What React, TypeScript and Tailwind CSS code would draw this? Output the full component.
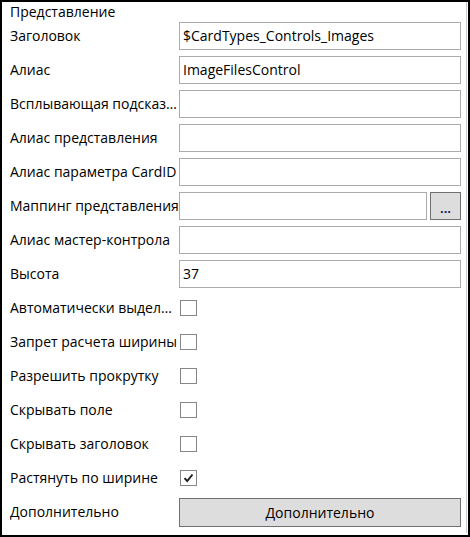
import React from 'react';

const fields = [
  { label: 'Заголовок', value: '$CardTypes_Controls_Images' },
  { label: 'Алиас', value: 'ImageFilesControl' },
  { label: 'Всплывающая подсказка', value: '' },
  { label: 'Алиас представления', value: '' },
  { label: 'Алиас параметра CardID', value: '' },
];

const checks = [
  { label: 'Автоматически выделять', checked: false },
  { label: 'Запрет расчета ширины', checked: false },
  { label: 'Разрешить прокрутку', checked: false },
  { label: 'Скрывать поле', checked: false },
  { label: 'Скрывать заголовок', checked: false },
  { label: 'Растянуть по ширине', checked: true },
];

function Label({ text }: { text: string }) {
  return (
    <div className="w-[169px] shrink-0 truncate whitespace-nowrap text-[14px] leading-[28px] text-black">
      {text}
    </div>
  );
}

function TextBox({ value }: { value: string }) {
  return (
    <div className="h-[28px] flex-1 border border-[#ababab] bg-white pl-[3px] text-[14px] leading-[26px] text-black whitespace-nowrap overflow-hidden">
      {value}
    </div>
  );
}

function CheckBox({ checked }: { checked: boolean }) {
  return (
    <div className="ml-[1px] flex h-[16px] w-[17px] items-center justify-center border border-[#868686] bg-white">
      {checked && (
        <svg width="11" height="10" viewBox="0 0 11 10">
          <path d="M1.5 5.2 L4.2 8 L9.5 1.5" fill="none" stroke="#1a1a1a" strokeWidth="1.9" />
        </svg>
      )}
    </div>
  );
}

export default function App() {
  return (
    <div
      className="h-[537px] w-[470px] border-2 border-black bg-white"
      style={{ fontFamily: '"Open Sans", "Noto Sans", sans-serif' }}
    >
      <div className="mr-[1px] h-[531px] border-r border-[#c9c9c9] pl-[8px] pr-[5px]">
        <div className="h-[20px] text-[14px] leading-[20px] text-black">Представление</div>
        <div className="flex flex-col gap-[6px]">
          {fields.map((f) => (
            <div key={f.label} className="flex h-[28px] items-center">
              <Label text={f.label} />
              <TextBox value={f.value} />
            </div>
          ))}
          <div className="flex h-[28px] items-center">
            <Label text="Маппинг представления" />
            <TextBox value="" />
            <div className="ml-[3px] flex h-[28px] w-[31px] items-end justify-center border border-[#707070] bg-[#dddddd] pb-[3px] text-[13px] leading-[16px] font-bold text-[#1b1b5a]">
              ...
            </div>
          </div>
          <div className="flex h-[28px] items-center">
            <Label text="Алиас мастер-контрола" />
            <TextBox value="" />
          </div>
          <div className="flex h-[28px] items-center">
            <Label text="Высота" />
            <TextBox value="37" />
          </div>
          {checks.map((c) => (
            <div key={c.label} className="flex h-[28px] items-center">
              <Label text={c.label} />
              <CheckBox checked={c.checked} />
            </div>
          ))}
          <div className="flex h-[28px] items-center">
            <Label text="Дополнительно" />
            <div className="flex h-[29px] flex-1 items-center justify-center border border-[#707070] bg-[#dddddd] text-[14px] text-black">
              Дополнительно
            </div>
          </div>
        </div>
      </div>
    </div>
  );
}
